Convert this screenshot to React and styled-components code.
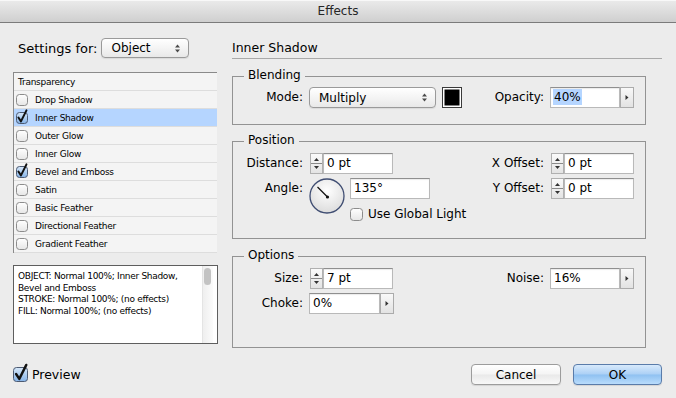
import React, { useId } from 'react';
import styled, { createGlobalStyle } from 'styled-components';

const GlobalStyle = createGlobalStyle`
  * {
    box-sizing: border-box;
  }
  html, body {
    margin: 0;
    padding: 0;
    background: #ececec;
  }
  body {
    font-family: "DejaVu Sans", "Liberation Sans", sans-serif;
    color: #000;
  }
`;

const Window = styled.div`
  width: 676px;
  height: 398px;
  background: #ececec;
  display: flex;
  flex-direction: column;
  overflow: hidden;
`;

const TitleBar = styled.div`
  height: 23px;
  flex-shrink: 0;
  border-bottom: 1px solid #7b7b7b;
  background: linear-gradient(#ebebeb, #cfcfcf);
  box-shadow: inset 0 1px 0 #f8f8f8;
  display: flex;
  align-items: center;
  justify-content: center;
  font-size: 12px;
  color: #262626;
`;

const Main = styled.div`
  display: grid;
  grid-template-columns: 205px 430px;
  column-gap: 14px;
  padding-left: 13px;
`;

const LeftColumn = styled.div`
  display: flex;
  flex-direction: column;
`;

const SettingsRow = styled.div`
  display: flex;
  align-items: center;
  gap: 4px;
  height: 20px;
  margin-top: 15px;
  padding-left: 5px;
  font-size: 13px;
`;

const PopupButton = styled.div`
  width: ${(p) => p.$width}px;
  height: ${(p) => p.$height}px;
  border: 1px solid #9a9a9a;
  border-radius: 4px;
  background: linear-gradient(#ffffff, #f3f3f3 55%, #e8e8e8);
  box-shadow: 0 1px 1px rgba(0, 0, 0, 0.08);
  display: flex;
  align-items: center;
  justify-content: space-between;
  padding: 0 7px 0 9px;
  font-size: 12px;
`;

const EffectList = styled.div`
  margin-top: 14px;
  width: 204px;
  height: 181px;
  border-top: 1px solid #8a8a8a;
  border-left: 1px solid #8a8a8a;
`;

const EffectRow = styled.div`
  height: 18px;
  display: flex;
  align-items: center;
  gap: 7px;
  padding-left: ${(p) => (p.$plain ? 4 : 2)}px;
  border-bottom: 1px solid #dddddd;
  background: ${(p) => (p.$selected ? '#b5d5ff' : '#f4f4f4')};
  font-size: 9px;
  letter-spacing: -0.25px;
  white-space: nowrap;
`;

const Summary = styled.div`
  margin-top: 12px;
  height: 79px;
  border: 1px solid #5e5e5e;
  background: #ffffff;
  display: flex;
`;

const SummaryText = styled.div`
  flex: 1;
  padding: 5px 0 0 4px;
  font-size: 9px;
  letter-spacing: -0.3px;
  line-height: 11.6px;
  white-space: nowrap;
`;

const ScrollTrack = styled.div`
  width: 11px;
  margin-right: 4px;
  border-left: 1px solid #e4e4e4;
  background: linear-gradient(90deg, #efefef, #fbfbfb);
  padding: 2px 1px;
`;

const ScrollThumb = styled.div`
  width: 7px;
  height: 17px;
  border-radius: 4px;
  background: #c3c3c3;
`;

const RightColumn = styled.div`
  display: flex;
  flex-direction: column;
`;

const SectionTitle = styled.div`
  padding: 17px 0 2px;
  line-height: 16px;
  font-size: 12.5px;
  border-bottom: 1px solid #a9a9a9;
`;

const Group = styled.div`
  position: relative;
  width: 414px;
  margin-top: ${(p) => p.$gap}px;
  border: 1px solid #939393;
  padding: ${(p) => p.$pad};
`;

const GroupLegend = styled.span`
  position: absolute;
  top: -9px;
  left: 11px;
  padding: 0 4px;
  background: #ececec;
  font-size: 12px;
  line-height: 14px;
`;

const FieldGrid = styled.div`
  display: grid;
  grid-template-columns: 70px 160px 69px 84px;
  column-gap: 6px;
  row-gap: 4px;
  align-items: start;
`;

const Label = styled.div`
  justify-self: end;
  height: 21px;
  line-height: 21px;
  font-size: 12px;
  white-space: nowrap;
`;

const Inline = styled.div`
  display: flex;
  align-items: flex-start;
  gap: ${(p) => p.$gap || 0}px;
`;

const TextBox = styled.div`
  width: ${(p) => (p.$width ? `${p.$width}px` : 'auto')};
  flex: ${(p) => (p.$width ? 'none' : '1')};
  height: 21px;
  background: #ffffff;
  border: 1px solid #b9b9b9;
  border-top-color: #8f8f8f;
  box-shadow: inset 0 1px 1px rgba(0, 0, 0, 0.08);
  padding-left: 3px;
  font-size: 12px;
  line-height: 19px;
  white-space: nowrap;
`;

const Selection = styled.span`
  display: inline-block;
  background: #b5d5ff;
  line-height: 16px;
  margin-left: -1px;
  padding: 0 1px;
`;

const FieldBox = styled.div`
  display: flex;
  width: ${(p) => p.$width}px;
  height: 21px;
`;

const StepperSvg = styled.svg`
  flex: none;
  display: block;
  margin-left: 1px;
`;

const ArrowSvg = styled.svg`
  flex: none;
  display: block;
`;

const Swatch = styled.div`
  width: 20px;
  height: 21px;
  background: #000000;
  border: 1px solid #3a3a3a;
  box-shadow: inset 0 0 0 1.5px #ffffff;
`;

const AngleStack = styled.div`
  display: flex;
  flex-direction: column;
`;

const CheckRow = styled.label`
  display: flex;
  align-items: center;
  gap: ${(p) => p.$gap}px;
  margin-top: ${(p) => p.$top || 0}px;
  font-size: ${(p) => p.$size}px;
  line-height: ${(p) => p.$line}px;
  white-space: nowrap;
`;

const CheckSvg = styled.svg`
  flex: none;
  display: block;
  overflow: visible;
`;

const Footer = styled.div`
  display: flex;
  align-items: center;
  justify-content: space-between;
  padding: 16px 14px 0 13px;
`;

const ButtonRow = styled.div`
  display: flex;
  gap: 12px;
`;

const PushButton = styled.button`
  width: ${(p) => p.$width}px;
  height: 21px;
  border-radius: 4px;
  font-family: inherit;
  font-size: 12px;
  color: #000;
  padding: 0;
  border: 1px solid ${(p) => (p.$primary ? '#5a7caa' : '#9c9c9c')};
  background: ${(p) =>
    p.$primary
      ? 'linear-gradient(#d8eafc, #acd0f5 48%, #8fc1f1 52%, #b9dcfc)'
      : 'linear-gradient(#ffffff, #f4f4f4 48%, #e9e9e9 52%, #f8f8f8)'};
  box-shadow: 0 1px 1px rgba(0, 0, 0, 0.1);
`;

const cleanId = (id) => id.replace(/[^a-zA-Z0-9]/g, '');

function CheckBox({ checked, size = 11 }) {
  const id = cleanId(useId());
  return (
    <CheckSvg width={size + 1} height={size + 1} viewBox={`0 0 ${size + 1} ${size + 1}`}>
      <defs>
        <linearGradient id={id} x1="0" y1="0" x2="0" y2="1">
          <stop offset="0" stopColor={checked ? '#d6e7f9' : '#ffffff'} />
          <stop offset="1" stopColor={checked ? '#86b4e8' : '#e6e6e6'} />
        </linearGradient>
      </defs>
      <rect x="0.5" y="0.5" width={size} height={size} rx="3" fill={`url(#${id})`} stroke={checked ? '#4c5a72' : '#8c8c8c'} />
      {checked && (
        <path
          d={`M${size * 0.22} ${size * 0.5} L${size * 0.45} ${size * 0.85} L${size * 0.95} ${-size * 0.15}`}
          stroke="#111"
          strokeWidth={size > 12 ? 2.4 : 2}
          fill="none"
          strokeLinecap="round"
          strokeLinejoin="round"
        />
      )}
    </CheckSvg>
  );
}

function PopupArrows() {
  return (
    <svg width="7" height="11" viewBox="0 0 7 11">
      <path d="M1 4.5 L6 4.5 L3.5 1.5 Z" fill="#4a4a4a" />
      <path d="M1 6.5 L6 6.5 L3.5 9.5 Z" fill="#4a4a4a" />
    </svg>
  );
}

function Stepper() {
  const id = cleanId(useId());
  return (
    <StepperSvg width="13" height="21" viewBox="0 0 13 21">
      <defs>
        <linearGradient id={id} x1="0" y1="0" x2="0" y2="1">
          <stop offset="0" stopColor="#fbfbfb" />
          <stop offset="1" stopColor="#e3e3e3" />
        </linearGradient>
      </defs>
      <rect x="0.5" y="0.5" width="12" height="20" fill={`url(#${id})`} stroke="#b0b0b0" />
      <line x1="1" y1="10.5" x2="12" y2="10.5" stroke="#8a8a8a" />
      <path d="M4 8 L9 8 L6.5 5 Z" fill="#333" />
      <path d="M4 13 L9 13 L6.5 16 Z" fill="#333" />
    </StepperSvg>
  );
}

function ArrowButton() {
  const id = cleanId(useId());
  return (
    <ArrowSvg width="14" height="21" viewBox="0 0 14 21">
      <defs>
        <linearGradient id={id} x1="0" y1="0" x2="0" y2="1">
          <stop offset="0" stopColor="#f9f9f9" />
          <stop offset="1" stopColor="#e2e2e2" />
        </linearGradient>
      </defs>
      <rect x="0.5" y="0.5" width="13" height="20" fill={`url(#${id})`} stroke="#ababab" />
      <path d="M5.5 8 L5.5 13 L8.5 10.5 Z" fill="#333" />
    </ArrowSvg>
  );
}

function StepperField({ value, width = 84 }) {
  return (
    <FieldBox $width={width}>
      <Stepper />
      <TextBox>{value}</TextBox>
    </FieldBox>
  );
}

function MenuField({ children, width = 84 }) {
  return (
    <FieldBox $width={width}>
      <TextBox>{children}</TextBox>
      <ArrowButton />
    </FieldBox>
  );
}

function AngleDial() {
  const id = cleanId(useId());
  return (
    <svg width="36" height="36" viewBox="0 0 36 36">
      <defs>
        <radialGradient id={id} cx="0.5" cy="0.35" r="0.65">
          <stop offset="0" stopColor="#ffffff" />
          <stop offset="1" stopColor="#dcdcdc" />
        </radialGradient>
      </defs>
      <circle cx="18" cy="18" r="17" fill={`url(#${id})`} stroke="#3f4d72" strokeWidth="1.3" />
      <line x1="18.5" y1="19" x2="8.5" y2="9" stroke="#111" strokeWidth="1.2" />
      <circle cx="18.5" cy="19" r="1.6" fill="#111" />
    </svg>
  );
}

const effects = [
  { name: 'Transparency', plain: true },
  { name: 'Drop Shadow' },
  { name: 'Inner Shadow', checked: true, selected: true },
  { name: 'Outer Glow' },
  { name: 'Inner Glow' },
  { name: 'Bevel and Emboss', checked: true },
  { name: 'Satin' },
  { name: 'Basic Feather' },
  { name: 'Directional Feather' },
  { name: 'Gradient Feather' },
];

export default function App() {
  return (
    <Window>
      <GlobalStyle />
      <TitleBar>Effects</TitleBar>
      <Main>
        <LeftColumn>
          <SettingsRow>
            <span>Settings for:</span>
            <PopupButton $width={88} $height={20}>
              <span>Object</span>
              <PopupArrows />
            </PopupButton>
          </SettingsRow>
          <EffectList>
            {effects.map((e) => (
              <EffectRow key={e.name} $plain={e.plain} $selected={e.selected}>
                {!e.plain && <CheckBox checked={e.checked} />}
                <span>{e.name}</span>
              </EffectRow>
            ))}
          </EffectList>
          <Summary>
            <SummaryText>
              <div>OBJECT: Normal 100%; Inner Shadow,</div>
              <div>Bevel and Emboss</div>
              <div>STROKE: Normal 100%; (no effects)</div>
              <div>FILL: Normal 100%; (no effects)</div>
            </SummaryText>
            <ScrollTrack>
              <ScrollThumb />
            </ScrollTrack>
          </Summary>
        </LeftColumn>

        <RightColumn>
          <SectionTitle>Inner Shadow</SectionTitle>

          <Group $gap={17} $pad="10px 0 16px">
            <GroupLegend>Blending</GroupLegend>
            <FieldGrid>
              <Label>Mode:</Label>
              <Inline $gap={6}>
                <PopupButton $width={127} $height={21}>
                  <span>Multiply</span>
                  <PopupArrows />
                </PopupButton>
                <Swatch />
              </Inline>
              <Label>Opacity:</Label>
              <MenuField>
                <Selection>40%</Selection>
              </MenuField>
            </FieldGrid>
          </Group>

          <Group $gap={16} $pad="11px 0 17px">
            <GroupLegend>Position</GroupLegend>
            <FieldGrid>
              <Label>Distance:</Label>
              <StepperField value="0 pt" />
              <Label>X Offset:</Label>
              <StepperField value="0 pt" />

              <Label>Angle:</Label>
              <Inline $gap={5}>
                <AngleDial />
                <AngleStack>
                  <TextBox $width={80}>135°</TextBox>
                  <CheckRow $gap={5} $top={9} $size={12} $line={13}>
                    <CheckBox size={12} />
                    <span>Use Global Light</span>
                  </CheckRow>
                </AngleStack>
              </Inline>
              <Label>Y Offset:</Label>
              <StepperField value="0 pt" />
            </FieldGrid>
          </Group>

          <Group $gap={17} $pad="11px 0 33px">
            <GroupLegend>Options</GroupLegend>
            <FieldGrid>
              <Label>Size:</Label>
              <StepperField value="7 pt" />
              <Label>Noise:</Label>
              <MenuField>16%</MenuField>

              <Label>Choke:</Label>
              <MenuField width={85}>0%</MenuField>
            </FieldGrid>
          </Group>
        </RightColumn>
      </Main>

      <Footer>
        <CheckRow $gap={4} $size={12.5} $line={15}>
          <CheckBox checked size={14} />
          <span>Preview</span>
        </CheckRow>
        <ButtonRow>
          <PushButton $width={90}>Cancel</PushButton>
          <PushButton $width={89} $primary>OK</PushButton>
        </ButtonRow>
      </Footer>
    </Window>
  );
}
